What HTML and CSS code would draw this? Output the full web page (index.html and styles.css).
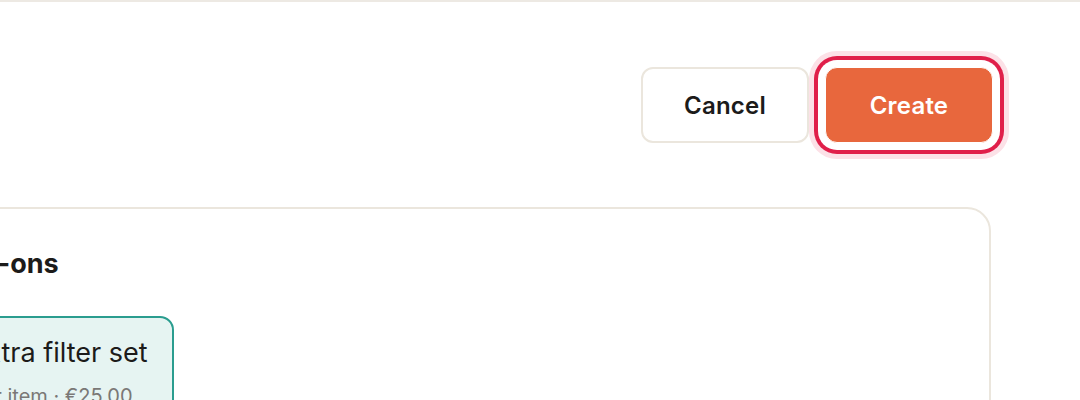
FILE: index.html
```html
<!DOCTYPE html>
<html lang="en">
<head>
<meta charset="utf-8">
<title>Create</title>
<link rel="stylesheet" href="styles.css">
</head>
<body>
<div class="page">
  <div class="actions">
    <button class="btn btn-cancel" type="button">Cancel</button>
    <button class="btn btn-create" type="button">Create</button>
  </div>
  <section class="card">
    <h2 class="card-title">Add-ons</h2>
    <div class="addons">
      <div class="addon">
        <div class="addon-name">Extra filter set</div>
        <div class="addon-meta">Per item · €25.00</div>
      </div>
    </div>
  </section>
</div>
</body>
</html>
```
FILE: styles.css
```css
html, body {
  margin: 0;
  padding: 0;
  background: #ffffff;
  overflow: hidden;
  height: 400px;
}
body {
  font-family: Inter, "DejaVu Sans", sans-serif;
  color: #1c1b1a;
}
.page {
  margin-left: -90px;
  border-top: 2px solid #ede9e3;
  padding: 65px 87px 0 0;
}
.actions {
  display: flex;
  justify-content: flex-end;
  gap: 16px;
}
.btn {
  box-sizing: border-box;
  width: 168px;
  height: 76px;
  border-radius: 12px;
  font-family: inherit;
  font-size: 24px;
  font-weight: 600;
  letter-spacing: 0.2px;
  cursor: pointer;
}
.btn-cancel {
  background: #ffffff;
  border: 2px solid #ebe6dd;
  color: #1c1b1a;
}
.btn-create {
  background: #e8673d;
  border: 1px solid #ffffff;
  color: #ffffff;
  box-shadow: 0 0 0 7px #ffffff, 0 0 0 11px #e01f4a, 0 0 0 16px #fce1e7;
}
.card {
  margin: 64px 2px 0 0;
  border: 2px solid #ebe6dd;
  border-radius: 24px;
  padding: 38px 32px 40px;
  min-height: 300px;
}
.card-title {
  margin: 0;
  font-size: 27px;
  line-height: 34px;
  font-weight: 700;
}
.addons {
  margin-top: 35px;
  display: flex;
  gap: 16px;
}
.addon {
  display: flex;
  flex-direction: column;
  gap: 11px;
  background: #e6f4f2;
  border: 2px solid #2a9d8f;
  border-radius: 14px;
  padding: 17px 24px;
}
.addon-name {
  font-size: 27px;
  line-height: 36px;
}
.addon-meta {
  font-size: 20px;
  line-height: 28px;
  color: #7a7876;
}
```
